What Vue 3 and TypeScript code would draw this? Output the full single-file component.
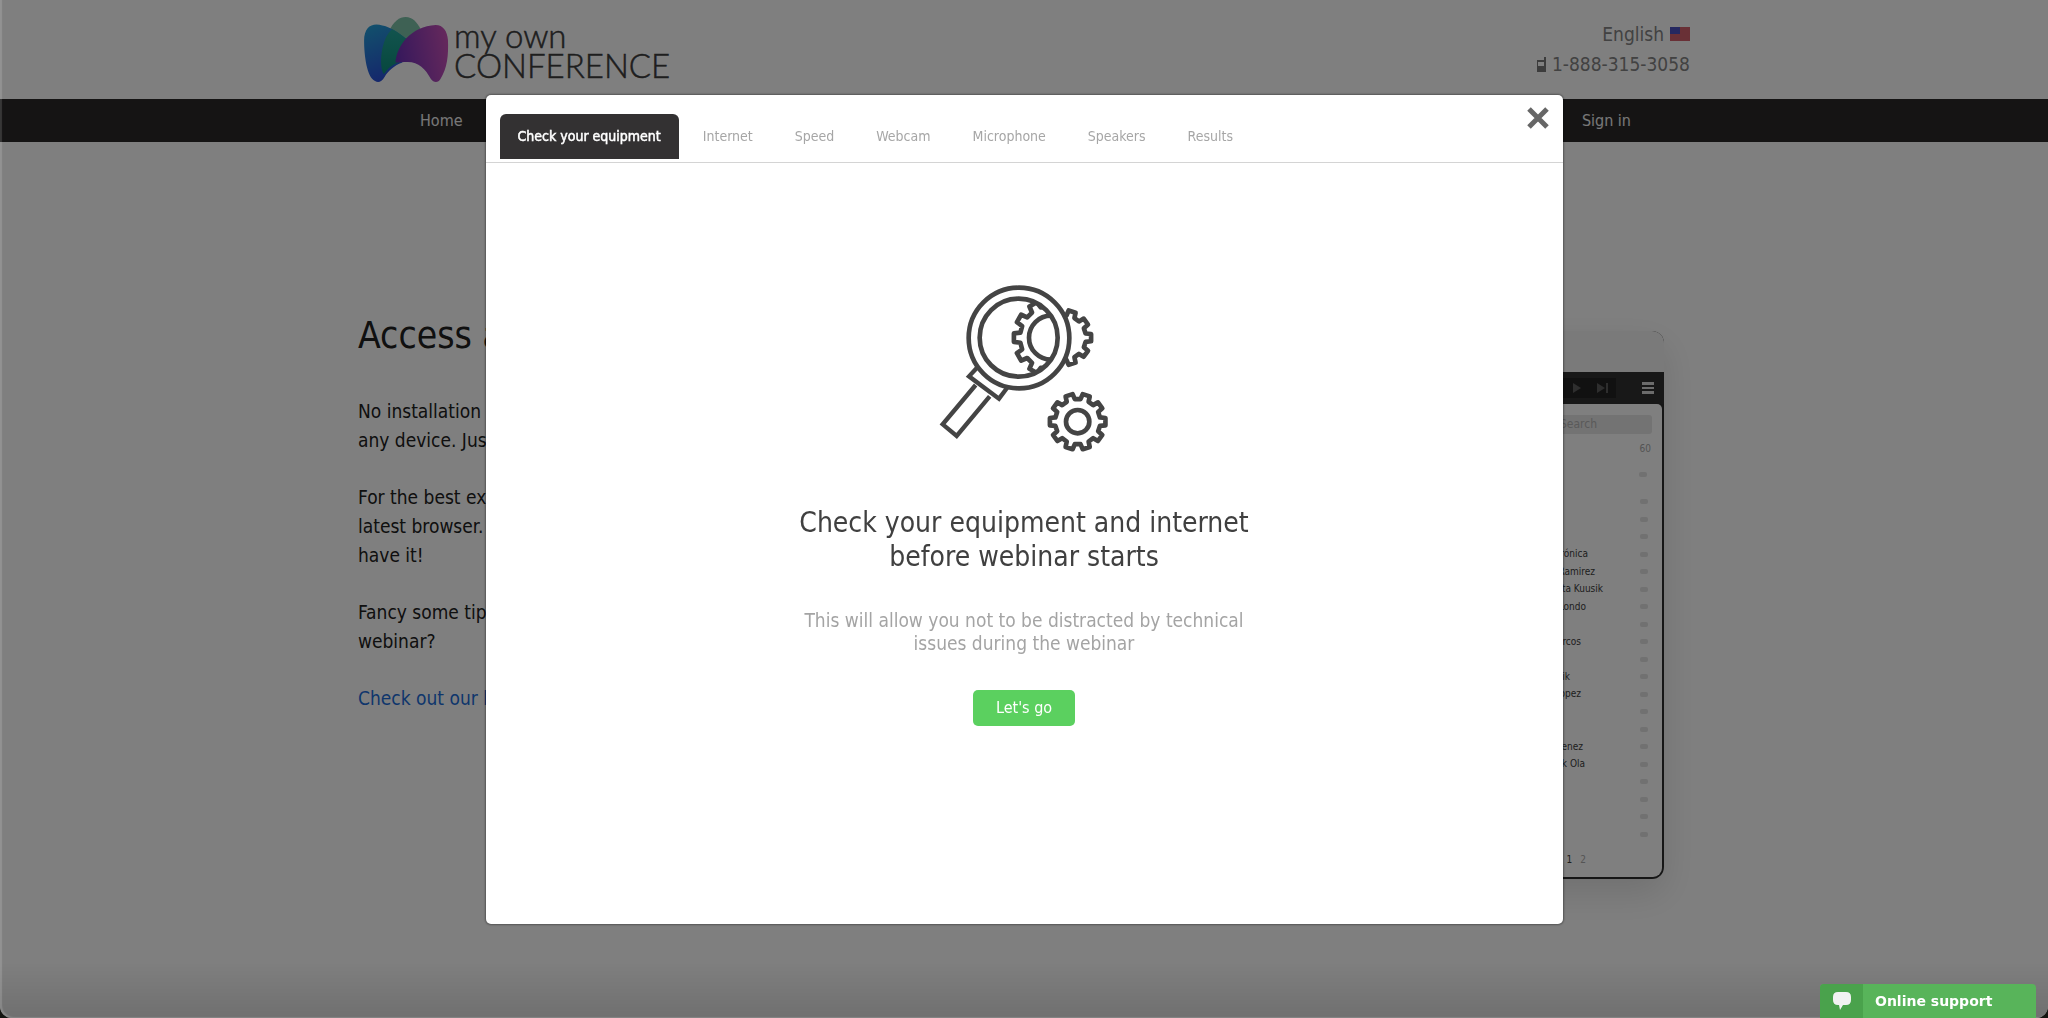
<script setup lang="ts">
interface Participant {
  name: string
  end: number
}

const tabs: string[] = ['Internet', 'Speed', 'Webcam', 'Microphone', 'Speakers', 'Results']

// `end` is the distance from the right side of the list to the end of the name.
const participants: Participant[] = [
  { name: '', end: 0 },
  { name: '', end: 0 },
  { name: '', end: 0 },
  { name: 'Verónica', end: 52 },
  { name: 'Ramirez', end: 45 },
  { name: 'Greta Kuusik', end: 37 },
  { name: 'Londo', end: 54 },
  { name: '', end: 0 },
  { name: 'Marcos', end: 59 },
  { name: '', end: 0 },
  { name: 'Erik', end: 70 },
  { name: 'Lopez', end: 59 },
  { name: '', end: 0 },
  { name: '', end: 0 },
  { name: 'Jimenez', end: 57 },
  { name: 'Erik Ola', end: 55 },
  { name: '', end: 0 },
  { name: '', end: 0 },
  { name: '', end: 0 },
  { name: '', end: 0 },
]

// Outline of a toothed wheel, one tooth pointing along the x axis.
function gear(cx: number, cy: number, teeth: number, outer: number, inner: number): string {
  const step = (Math.PI * 2) / teeth
  const corners: [number, number][] = [
    [-0.3, inner],
    [-0.21, outer],
    [0.21, outer],
    [0.3, inner],
  ]
  const points: string[] = []
  for (let i = 0; i < teeth; i++) {
    for (const [offset, radius] of corners) {
      const angle = (i + offset) * step
      points.push(`${(cx + Math.cos(angle) * radius).toFixed(1)} ${(cy + Math.sin(angle) * radius).toFixed(1)}`)
    }
  }
  return `M${points.join('L')}Z`
}

const magnifiedGear = gear(400, 200, 12, 116, 97)
const hiddenGear = gear(434, 200, 10, 83, 67)
const smallGear = gear(476, 452, 10, 84, 68)
</script>

<template>
  <div class="page">
    <header class="top container">
      <a class="logo" href="#" aria-label="My Own Conference">
        <svg width="90" height="72" viewBox="0 0 264 210" aria-hidden="true">
          <defs>
            <linearGradient id="lg-blue" x1="0" y1="0" x2="0.3" y2="1">
              <stop offset="0" stop-color="#24a4d8" />
              <stop offset="1" stop-color="#2a50d8" />
            </linearGradient>
            <linearGradient id="lg-teal" x1="0" y1="0" x2="0" y2="1">
              <stop offset="0" stop-color="#24a89c" />
              <stop offset="1" stop-color="#0d8f7c" />
            </linearGradient>
            <linearGradient id="lg-pink" x1="0" y1="0.6" x2="1" y2="0.4">
              <stop offset="0" stop-color="#6a30b8" />
              <stop offset="1" stop-color="#c850b8" />
            </linearGradient>
          </defs>
          <path d="M84 52C98 20 116 8 134 8c20 0 34 16 44 36L138 84z" fill="#7cc2a8" />
          <path d="M12 78C12 44 28 30 48 30c50 4 72 34 90 42l-14 70c-26 10-40 24-52 42-8 14-18 18-28 12C20 186 12 120 12 78z" fill="url(#lg-blue)" />
          <path d="M94 44c24 12 34 24 48 32l-24 64c-24 8-34 16-48 36-16-24-8-106 24-132z" fill="url(#lg-teal)" />
          <path d="M104 142c4-50 46-106 118-110 22 0 34 18 36 44 2 44-2 84-22 114-6 12-20 12-28 0-16-30-36-50-68-50-14 0-26 2-36 2z" fill="url(#lg-pink)" />
        </svg>
        <span class="logo-text">my own<br />CONFERENCE</span>
      </a>
      <div class="contact">
        <a class="contact-row" href="#">
          English
          <svg width="20" height="14" viewBox="0 0 20 14" aria-hidden="true">
            <rect width="20" height="14" fill="#d09aa2" />
            <path d="M0 1h20M0 3h20M0 5h20M0 7h20M0 9h20M0 11h20M0 13h20" stroke="#d42838" stroke-width="1" />
            <rect width="10" height="7" fill="#4a50c0" />
          </svg>
        </a>
        <a class="contact-row" href="tel:18883153058">
          <svg width="9" height="15" viewBox="0 0 9 15" aria-hidden="true">
            <path d="M7 0h2v15H0V3h7zM1 5v4h6V5z" fill="#787878" fill-rule="evenodd" />
          </svg>
          1-888-315-3058
        </a>
      </div>
    </header>

    <nav class="nav">
      <div class="container nav-inner">
        <a href="#">Home</a>
        <a href="#">Sign in</a>
      </div>
    </nav>

    <main class="container content">
      <section class="copy">
        <h1>Access anywhere</h1>
        <p>No installation<br />any device. Just</p>
        <p>For the best experience<br />latest browser.<br />have it!</p>
        <p>Fancy some tips<br />webinar?</p>
        <p><a href="#">Check out our blog</a></p>
      </section>

      <section class="room" aria-label="Webinar room">
        <div class="room-top"></div>
        <div class="room-bar">
          <div class="player">
            <svg width="37" height="12" viewBox="0 0 37 12" fill="#5c5c5c" aria-hidden="true">
              <path d="M2 1l8 5-8 5zM26 1l8 5-8 5zM35 1h2v10h-2z" />
            </svg>
          </div>
          <svg width="12" height="12" viewBox="0 0 12 12" aria-hidden="true">
            <path d="M0 0h12v3H0zM0 5h12v2H0zM0 9h12v3H0z" fill="#d8d8d8" />
          </svg>
        </div>
        <div class="room-body">
          <div class="search">Search</div>
          <div class="count">60</div>
          <div class="filter"><i class="mark"></i></div>
          <ul>
            <li v-for="(p, i) in participants" :key="i">
              <span class="name" :style="{ marginRight: p.end + 'px' }">{{ p.name }}</span>
              <i class="mark"></i>
            </li>
          </ul>
          <div class="pager"><b>1</b><span>2</span></div>
        </div>
      </section>
    </main>
  </div>

  <div class="overlay">
    <div class="modal" role="dialog" aria-labelledby="check-title">
      <div class="modal-head">
        <button class="tab active" type="button">Check your equipment</button>
        <div class="tabs">
          <button v-for="tab in tabs" :key="tab" class="tab" type="button">{{ tab }}</button>
        </div>
        <button class="close" type="button" aria-label="Close">
          <svg width="24" height="24" viewBox="0 0 24 24" aria-hidden="true">
            <path d="M3 3l18 18M21 3L3 21" stroke="#666" stroke-width="5" />
          </svg>
        </button>
      </div>
      <div class="modal-body">
        <svg class="picture" width="170" height="168" viewBox="60 42 510 504" fill="none" stroke="#444" stroke-width="14" stroke-linejoin="round" aria-hidden="true">
          <clipPath id="lens"><circle cx="299" cy="200" r="117" /></clipPath>
          <path :d="hiddenGear" />
          <circle cx="300" cy="201" r="151" fill="#fff" />
          <g clip-path="url(#lens)">
            <path :d="magnifiedGear" />
            <circle cx="396" cy="200" r="66" />
          </g>
          <circle cx="299" cy="200" r="117" />
          <g stroke-linejoin="miter" stroke-width="13">
            <path d="M174 290l-24 26 90 67 24-32" />
            <path d="M170 342L71 460l42 35 99-119" />
          </g>
          <path :d="smallGear" />
          <circle cx="476" cy="452" r="35" />
        </svg>
        <h2 id="check-title">Check your equipment and internet<br />before webinar starts</h2>
        <p>This will allow you not to be distracted by technical<br />issues during the webinar</p>
        <button class="go" type="button">Let's go</button>
      </div>
    </div>
  </div>

  <button class="support" type="button">
    <span class="support-icon">
      <svg width="20" height="20" viewBox="0 0 20 20" aria-hidden="true">
        <path d="M6 1h8q5 0 5 5v3q0 5-5 5h-3l-3 5-1-5H6q-5 0-5-5V6q0-5 5-5z" fill="#f2f2f2" />
      </svg>
    </span>
    <span class="support-text">Online support</span>
  </button>
</template>

<style>
html {
  background: #141410;
}

body {
  margin: 0;
}
</style>

<style scoped>
.page,
.overlay,
button {
  font-family: "DejaVu Sans Condensed", "DejaVu Sans", sans-serif;
}

.page {
  min-height: 100vh;
  background: #fff;
  border-radius: 0 0 12px 12px;
  overflow: hidden;
}

a {
  color: inherit;
  text-decoration: none;
}

button {
  margin: 0;
  padding: 0;
  border: 0;
  background: none;
  cursor: pointer;
}

.container {
  box-sizing: border-box;
  width: 100%;
  max-width: 1332px;
  margin: 0 auto;
}

.top {
  display: flex;
  justify-content: space-between;
  height: 99px;
}

.logo {
  display: flex;
  align-items: flex-start;
  gap: 4px;
  padding: 14px 0 0 2px;
  color: #3c3c3c;
}

.logo-text {
  padding-top: 6px;
  font: 300 33px/30px Lato, sans-serif;
  -webkit-text-stroke: 0.5px #3c3c3c;
}

.contact {
  display: flex;
  flex-direction: column;
  align-items: flex-end;
  padding-top: 19px;
  color: #848484;
  font-size: 19px;
  line-height: 30px;
}

.contact-row {
  display: flex;
  align-items: center;
  gap: 6px;
}

.nav {
  background: #2a2829;
}

.nav-inner {
  display: flex;
  justify-content: space-between;
  padding: 0 59px 0 62px;
  color: #f0f0f0;
  font-size: 16px;
  line-height: 43px;
}

.content {
  display: flex;
  justify-content: space-between;
  padding-right: 26px;
}

.copy {
  padding-top: 169px;
  color: #202020;
  font-size: 19px;
  line-height: 29px;
}

.copy h1 {
  margin: 0 0 36px;
  font-size: 37px;
  font-weight: 400;
  line-height: 50px;
}

.copy p {
  margin: 0 0 28px;
}

.copy a {
  color: #1c6cd8;
}

.room {
  display: flex;
  flex-direction: column;
  width: 600px;
  margin-top: 189px;
  border-radius: 12px;
  background: #2c2c2c;
  box-shadow: 0 14px 36px rgba(0, 0, 0, 0.12);
}

.room-top {
  height: 41px;
  border-radius: 12px 12px 0 0;
  background: #f4f4f4;
}

.room-bar {
  display: flex;
  align-items: center;
  justify-content: flex-end;
  gap: 26px;
  height: 32px;
  padding-right: 10px;
  background: #303030;
}

.player {
  display: flex;
  align-items: center;
  height: 20px;
  padding: 0 8px;
  background: #222;
}

.room-body {
  display: flex;
  flex-direction: column;
  margin: 0 2px 2px;
  border-radius: 0 5px 9px 9px;
  background: #fff;
  font-size: 10px;
}

.search {
  width: 126px;
  margin: 11px 10px 0 auto;
  padding-left: 34px;
  box-sizing: border-box;
  border-radius: 3px;
  background: #e6e6e6;
  color: #b4b4b4;
  font-size: 12px;
  line-height: 19px;
}

.count {
  padding: 9px 11px 0 0;
  color: #a8a8a8;
  text-align: right;
  line-height: 12px;
}

.filter {
  display: flex;
  justify-content: flex-end;
  align-items: center;
  height: 38px;
  padding-right: 15px;
}

.mark {
  width: 8px;
  height: 5px;
  border-radius: 2px;
  background: #e2e2e2;
}

ul {
  display: flex;
  flex-direction: column;
  height: 350px;
  margin: 0;
  padding: 0 14px 0 0;
  list-style: none;
}

li {
  display: flex;
  flex: 1;
  align-items: center;
  justify-content: flex-end;
  color: #404040;
}

.name {
  line-height: 16px;
}

.pager {
  display: flex;
  justify-content: flex-end;
  gap: 8px;
  padding: 10px 76px 10px 0;
  color: #aaa;
  line-height: 14px;
}

.pager b {
  color: #404040;
  font-weight: 400;
}

.overlay {
  position: fixed;
  inset: 0;
  display: flex;
  align-items: center;
  justify-content: center;
  border-radius: 0 0 12px 12px;
  box-shadow: inset 2px -1px 1px rgba(255, 255, 255, 0.15);
  background: linear-gradient(transparent calc(100% - 56px), rgba(0, 0, 0, 0.12)), rgba(0, 0, 0, 0.5);
}

.modal {
  width: calc(100% - 48px);
  max-width: 1077px;
  border-radius: 5px;
  background: #fff;
  box-shadow: 0 0 2px 1px rgba(0, 0, 0, 0.35);
}

.modal-head {
  display: flex;
  align-items: flex-start;
  height: 68px;
  padding: 0 13px 0 14px;
  box-sizing: border-box;
  border-bottom: 1px solid #d4d4d4;
}

.tab {
  padding: 0;
  color: #a6a6a6;
  font-size: 14px;
  line-height: 45px;
  white-space: nowrap;
}

.tab.active {
  margin-top: 19px;
  padding: 0 18px;
  border-radius: 6px 6px 0 0;
  background: #333132;
  color: #fff;
  -webkit-text-stroke: 0.5px #fff;
}

.tabs {
  display: flex;
  gap: 42px;
  margin: 19px auto 0 24px;
}

.close {
  display: flex;
  margin-top: 11px;
}

.modal-body {
  display: flex;
  flex-direction: column;
  align-items: center;
  padding: 122px 24px 198px;
  text-align: center;
}

h2 {
  margin: 53px 0 0;
  color: #404040;
  font-size: 28px;
  font-weight: 400;
  line-height: 34px;
}

.modal-body p {
  margin: 35px 0 0;
  color: #a4a4a4;
  font-size: 19px;
  line-height: 23px;
}

.go {
  margin-top: 35px;
  padding: 0 23px;
  border-radius: 5px;
  background: #5bd05f;
  color: #fff;
  font-size: 16px;
  line-height: 36px;
}

.support {
  position: fixed;
  right: 12px;
  bottom: 0;
  display: flex;
  width: 216px;
  height: 34px;
  border-radius: 4px 4px 0 0;
  overflow: hidden;
  background: #58b45a;
  color: #fff;
}

.support-icon {
  display: flex;
  align-items: center;
  justify-content: center;
  width: 43px;
  height: 34px;
  background: #4aa24c;
}

.support-text {
  padding-left: 12px;
  font: 700 14px/34px "DejaVu Sans", sans-serif;
}
</style>
